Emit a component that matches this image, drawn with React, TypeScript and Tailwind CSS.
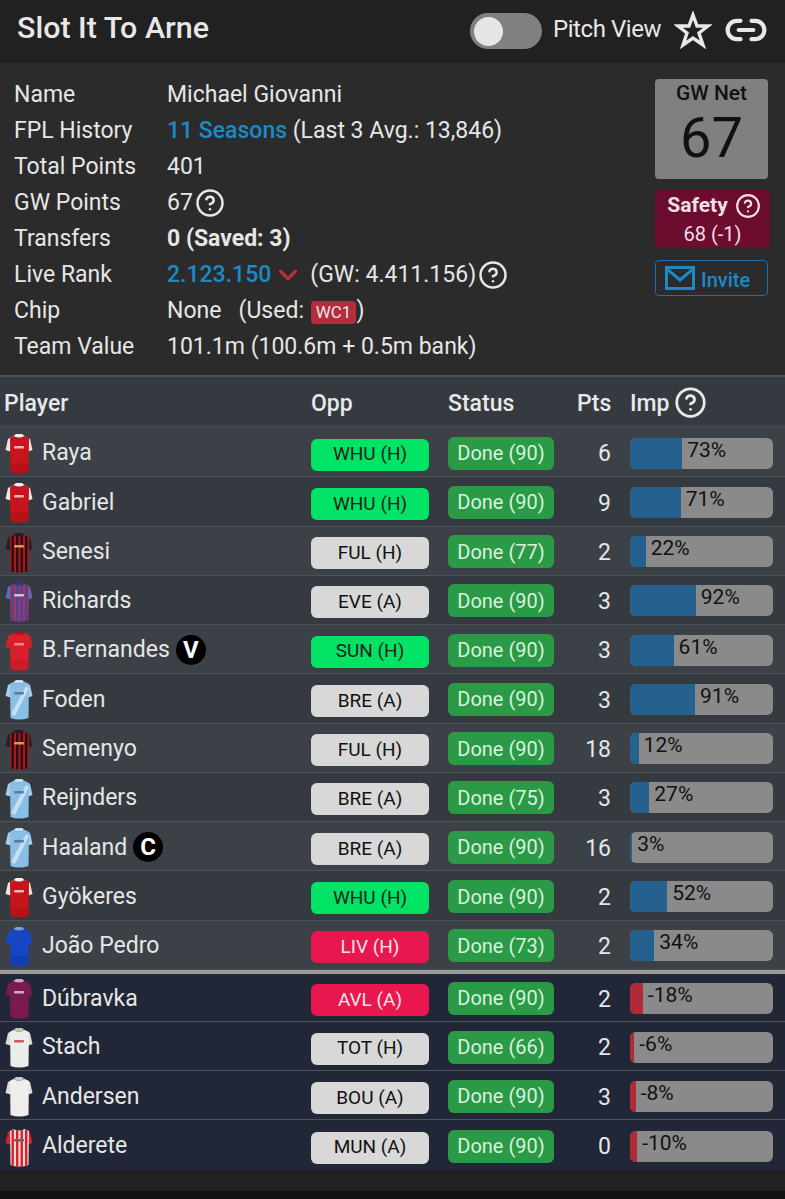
import { ChevronDown, CircleHelp, Link2 } from "lucide-react"

type Kit = { base: string; stripe?: string; sleeve?: string; collar?: string; sash?: string; logo?: string; shade?: string }

const ARS: Kit = { base: "#c8141c", sleeve: "#f1e6e2", collar: "#f5eeee", logo: "#eeb4b4", shade: "#a50f16" }
const BOU: Kit = { base: "#b5121b", stripe: "#1c1416", sleeve: "#26201f", collar: "#2a1a1a", logo: "#d89a4c" }
const CRY: Kit = { base: "#b3324e", stripe: "#3d49a8", sleeve: "#5a6cb8", collar: "#2c3a8c", logo: "#c8c8dc" }
const MUN: Kit = { base: "#d81f2a", sleeve: "#d81f2a", collar: "#a8121c", logo: "#e88a8a", shade: "#bb1722" }
const MCI: Kit = { base: "#89bfe4", sleeve: "#a5cfea", sash: "#c4e0f2", collar: "#c4e0f2", logo: "#5a7c9c" }
const CHE: Kit = { base: "#1646c4", sleeve: "#1646c4", collar: "#7d9be8", shade: "#0f369e" }
const AVL: Kit = { base: "#7a1a4e", sleeve: "#7a1a4e", collar: "#d7a6c0", logo: "#d3b0c4" }
const LEE: Kit = { base: "#ececea", sleeve: "#dddcd8", collar: "#c8c8b0", logo: "#d0545a" }
const FUL: Kit = { base: "#efeeec", sleeve: "#dedddb", collar: "#c9c9c9" }
const SUN: Kit = { base: "#f3dada", stripe: "#d8202c", sleeve: "#d8202c", logo: "#7a5a5a" }

const starters = [
  { name: "Raya", kit: ARS, opp: "WHU (H)", level: "easy", status: "Done (90)", pts: 6, imp: 73 },
  { name: "Gabriel", kit: ARS, opp: "WHU (H)", level: "easy", status: "Done (90)", pts: 9, imp: 71 },
  { name: "Senesi", kit: BOU, opp: "FUL (H)", level: "mid", status: "Done (77)", pts: 2, imp: 22 },
  { name: "Richards", kit: CRY, opp: "EVE (A)", level: "mid", status: "Done (90)", pts: 3, imp: 92 },
  { name: "B.Fernandes", kit: MUN, badge: "V", opp: "SUN (H)", level: "easy", status: "Done (90)", pts: 3, imp: 61 },
  { name: "Foden", kit: MCI, opp: "BRE (A)", level: "mid", status: "Done (90)", pts: 3, imp: 91 },
  { name: "Semenyo", kit: BOU, opp: "FUL (H)", level: "mid", status: "Done (90)", pts: 18, imp: 12 },
  { name: "Reijnders", kit: MCI, opp: "BRE (A)", level: "mid", status: "Done (75)", pts: 3, imp: 27 },
  { name: "Haaland", kit: MCI, badge: "C", opp: "BRE (A)", level: "mid", status: "Done (90)", pts: 16, imp: 3 },
  { name: "Gyökeres", kit: ARS, opp: "WHU (H)", level: "easy", status: "Done (90)", pts: 2, imp: 52 },
  { name: "João Pedro", kit: CHE, opp: "LIV (H)", level: "hard", status: "Done (73)", pts: 2, imp: 34 },
]

const bench = [
  { name: "Dúbravka", kit: AVL, opp: "AVL (A)", level: "hard", status: "Done (90)", pts: 2, imp: -18 },
  { name: "Stach", kit: LEE, opp: "TOT (H)", level: "mid", status: "Done (66)", pts: 2, imp: -6 },
  { name: "Andersen", kit: FUL, opp: "BOU (A)", level: "mid", status: "Done (90)", pts: 3, imp: -8 },
  { name: "Alderete", kit: SUN, opp: "MUN (A)", level: "mid", status: "Done (90)", pts: 0, imp: -10 },
]

const info = ["Name", "FPL History", "Total Points", "GW Points", "Transfers", "Live Rank", "Chip", "Team Value"]

const BODY = "M10.5 3 Q16 6 21.5 3 L26 5 L25.5 39 Q16 42 7.5 39 L7 5 Z"

function Jersey({ kit, id }: { kit: Kit; id: string }) {
  return (
    <svg viewBox="0 0 30 42" className="w-[30px] h-[42px] shrink-0">
      <defs>
        <clipPath id={id}>
          <path d={BODY} />
        </clipPath>
      </defs>
      <path d="M10.5 3 L5 6 L2.5 17 L7.5 18.5 Z" fill={kit.sleeve ?? kit.base} />
      <path d="M21.5 3 L27 6 L29.5 17 L25.5 18.5 Z" fill={kit.sleeve ?? kit.base} />
      <path d={BODY} fill={kit.base} />
      <g clipPath={`url(#${id})`}>
        {kit.stripe &&
          [8.5, 13, 17.5, 22].map((x) => (
            <rect key={x} x={x} y="0" width="2.4" height="42" fill={kit.stripe} />
          ))}
        {kit.sash && <path d="M23 7 L26 9 L12 37 L8 35 Z" fill={kit.sash} />}
        {kit.shade && <rect x="7" y="30" width="19" height="12" fill={kit.shade} opacity="0.5" />}
      </g>
      {kit.collar && <path d="M10.5 3 Q16 6 21.5 3 L19 1 H13 Z" fill={kit.collar} />}
      {kit.logo && <rect x="11" y="13" width="10" height="2.6" rx="1" fill={kit.logo} />}
    </svg>
  )
}

function Row({ p, bg, id, h, last }: { p: (typeof starters)[number]; bg: string; id: string; h: string; last?: boolean }) {
  const opp =
    p.level === "easy"
      ? "bg-[#00e364] text-[#222]"
      : p.level === "hard"
        ? "bg-[#e8174f] text-[#f4e4e8]"
        : "bg-[#d8d8d8] text-[#111]"
  const neg = p.imp < 0
  return (
    <div className={`flex items-center pt-[4px] ${h} ${last ? "" : "border-b border-[#4e535a]"} ${bg}`}>
      <div className="w-[311px] flex items-center pl-[3px] gap-[9px] text-[23px] text-[#e6e6e6]">
        <Jersey kit={p.kit} id={id} />
        <span className="-mt-[1px]">{p.name}</span>
        {p.badge && (
          <span className="-ml-[3px] -mt-[3px] w-[30px] h-[30px] rounded-full bg-black text-white font-bold text-[24px] flex items-center justify-center">
            {p.badge}
          </span>
        )}
      </div>
      <div className={`w-[118px] h-[32px] mt-[1px] rounded-md flex items-center justify-center text-[19px] ${opp}`}>
        {p.opp}
      </div>
      <div className="ml-[19px] w-[106px] h-[33px] -mt-[2px] rounded-md bg-[#2a9a46] text-[#d9f2de] text-[20px] flex items-center justify-center">
        {p.status}
      </div>
      <div className="w-[57px] text-right text-[23px] text-[#e6e6e6] mt-[1px]">{p.pts}</div>
      <div className="ml-[19px] w-[143px] h-[31px] -mt-[2px] rounded-md bg-[#8a8a8a] flex overflow-hidden">
        <div
          className={neg ? "bg-[#b02a37]" : "bg-[#24618f]"}
          style={{ width: `${Math.abs(p.imp) / 2}%` }}
        />
        <span className="pl-[5px] text-[21px] leading-[24px] text-[#111]">{p.imp}%</span>
      </div>
    </div>
  )
}

export default function App() {
  return (
    <div className="w-[785px] h-[1199px] bg-[#111] overflow-hidden font-['Roboto',sans-serif]">
      <div className="h-[63px] bg-[#212121] flex items-center pl-[17px] pr-[17px] text-[#e8e8e8]">
        <h1 className="text-[30.4px] font-medium -mt-[8px]">Slot It To Arne</h1>
        <div className="ml-auto w-[72px] h-[36px] -mt-[1px] rounded-full bg-[#808080] flex items-center pl-[4px]">
          <span className="w-[29px] h-[29px] rounded-full bg-[#e6e6e6]" />
        </div>
        <span className="ml-[11px] text-[24px] tracking-[-0.45px] -mt-[5px]">Pitch View</span>
        <svg viewBox="0 0 38 38" className="ml-[13px] -mt-[3px] w-[38px] h-[38px]">
          <path
            d="M19 4 L23 15 L34 15 L25 22 L29 34 L19 27 L9 34 L13 22 L4 15 L15 15 Z"
            fill="none"
            stroke="currentColor"
            strokeWidth="3.4"
            strokeLinejoin="miter"
          />
        </svg>
        <Link2 className="ml-[12px] -mt-[3px] w-[44px] h-[44px]" strokeWidth={2.3} />
      </div>

      <div className="h-[313px] bg-[#2b2b2b] flex text-[#e6e6e6] text-[23px] border-b border-[#4a4f55]">
        <div className="w-[167px] pl-[14px] pt-[14px] flex flex-col">
          {info.map((label) => (
            <div key={label} className="h-[36px] leading-[36px] whitespace-nowrap">
              {label}
            </div>
          ))}
        </div>
        <div className="w-[474px] pt-[14px] flex flex-col">
          <div className="h-[36px] leading-[36px]">Michael Giovanni</div>
          <div className="h-[36px] leading-[36px]">
            <span className="text-[#1b8ac7] font-medium">11 Seasons</span> (Last 3 Avg.: 13,846)
          </div>
          <div className="h-[36px] leading-[36px]">401</div>
          <div className="h-[36px] flex items-center gap-[2px]">
            67 <CircleHelp className="w-[30px] h-[30px]" strokeWidth={2} />
          </div>
          <div className="h-[36px] leading-[36px] font-bold">0 (Saved: 3)</div>
          <div className="h-[36px] flex items-center">
            <span className="text-[#1b8ac7] font-medium">2.123.150</span>
            <ChevronDown className="ml-[2px] w-[30px] h-[30px] text-[#b9303f]" strokeWidth={2.6} />
            <span className="ml-[7px]">(GW: 4.411.156)</span>
            <CircleHelp className="ml-[2px] w-[30px] h-[30px]" strokeWidth={2} />
          </div>
          <div className="h-[36px] flex items-center whitespace-pre">
            None{"   "}(Used:{" "}
            <span className="ml-[1px] px-[5px] h-[23px] rounded bg-[#b52d3d] text-[17px] leading-[23px] mt-[3px]">WC1</span>
            )
          </div>
          <div className="h-[36px] leading-[36px]">101.1m (100.6m + 0.5m bank)</div>
        </div>
        <div className="pt-[16px] pl-[14px] flex flex-col">
          <div className="w-[113px] h-[100px] rounded bg-[#808080] text-[#111] flex flex-col items-center">
            <div className="text-[21px] font-medium leading-[28px]">GW Net</div>
            <div className="text-[56px] leading-[62px]">67</div>
          </div>
          <div className="mt-[11px] w-[115px] h-[58px] rounded bg-[#6c0d30] text-[#f0dfe5] flex flex-col items-center">
            <div className="h-[32px] flex items-center gap-[7px] pl-[3px] font-bold text-[21px]">
              Safety <CircleHelp className="w-[26px] h-[26px]" strokeWidth={2} />
            </div>
            <div className="text-[20px] leading-[24px]">68 (-1)</div>
          </div>
          <div className="mt-[12px] w-[113px] h-[36px] rounded border border-[#1b6fb0] flex items-center pl-[9px] gap-[6px] text-[#1b8ac7] font-medium text-[20px]">
            <svg viewBox="0 0 30 24" className="w-[30px] h-[24px]" fill="none" stroke="currentColor" strokeWidth="3">
              <rect x="1.5" y="1.5" width="27" height="21" />
              <path d="M2 3 L15 14 L28 3" />
            </svg>
            <span className="mt-[3px]">Invite</span>
          </div>
        </div>
      </div>

      <div className="h-[52px] pt-[6px] bg-[#343a40] border-t border-[#4a4f55] border-b-[3px] border-b-[#42474e] flex items-center text-[23px] font-medium text-[#e8e8e8]">
        <div className="w-[311px] pl-[4px]">Player</div>
        <div className="w-[137px]">Opp</div>
        <div className="w-[129px]">Status</div>
        <div className="w-[53px]">Pts</div>
        <div className="flex items-center gap-[5px]">
          Imp <CircleHelp className="w-[33px] h-[33px] -mt-[4px]" strokeWidth={2} />
        </div>
      </div>

      {starters.map((p, i) => (
        <Row key={p.name} p={p} id={`s${i}`} h="h-[49.27px]" bg={i % 2 === 0 ? "bg-[#3c4148]" : "bg-[#343a40]"} />
      ))}
      <div className="h-[4px] bg-[#9a9a9a]" />
      {bench.map((p, i) => (
        <Row
          key={p.name}
          p={p}
          id={`b${i}`}
          h={i === 0 ? "h-[48px]" : "h-[49.27px]"}
          last={i === bench.length - 1}
          bg="bg-[#212737]"
        />
      ))}
      <div className="h-[21px] bg-[#212121]" />
    </div>
  )
}
